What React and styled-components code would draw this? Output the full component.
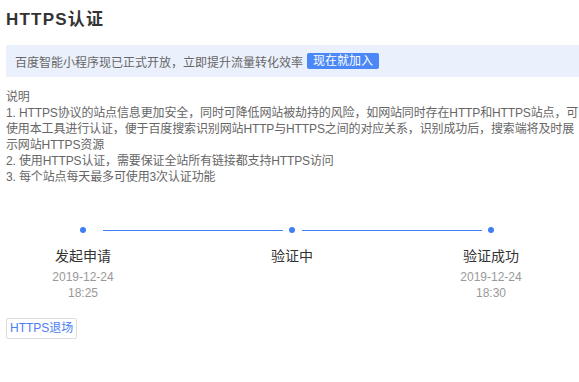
import React from "react";
import styled, { createGlobalStyle } from "styled-components";

const Global = createGlobalStyle`
  html, body { margin: 0; padding: 0; background: #fff; }
  body { font-family: "Liberation Sans", Arial, "Noto Sans CJK SC", sans-serif; }
`;

const Page = styled.div`
  padding: 8px 0 0 6px;
  width: 573px;
`;

const Title = styled.h1`
  margin: 0;
  font-size: 17px;
  line-height: 24px;
  font-weight: bold;
  letter-spacing: 1.2px;
  color: #333;
`;

const Banner = styled.div`
  margin-top: 13px;
  height: 32px;
  background: #ebf1fc;
  display: flex;
  align-items: center;
  padding-left: 9px;
  font-size: 12px;
  color: #666;
`;

const JoinButton = styled.span`
  margin-left: 4px;
  height: 16px;
  line-height: 16px;
  padding: 0 6px;
  background: #4a87f7;
  color: #fff;
  border-radius: 2px;
  font-size: 12px;
`;

const Notes = styled.div`
  margin-top: 12px;
  font-size: 12px;
  line-height: 16px;
  letter-spacing: -0.13px;
  color: #666;
`;

const NoteLine = styled.div``;

const Timeline = styled.div`
  display: flex;
  align-items: flex-start;
  margin: 42px 0 0 68px;
`;

const Step = styled.div`
  width: 18px;
  display: flex;
  flex-direction: column;
  align-items: center;
  white-space: nowrap;
`;

const Dot = styled.span`
  width: 6px;
  height: 6px;
  border-radius: 50%;
  background: #3f7ff5;
  display: block;
`;

const Connector = styled.div`
  width: 180px;
  height: 1px;
  margin-top: 3px;
  margin-left: ${(p) => p.$offset}px;
  background: #3f7ff5;
`;

const StepLabel = styled.div`
  margin-top: 13px;
  font-size: 14px;
  line-height: 20px;
  color: #333;
`;

const StepTime = styled.div`
  margin-top: 3px;
  font-size: 12px;
  line-height: 16px;
  color: #999;
  text-align: center;
`;

const ExitButton = styled.button`
  margin-top: 17px;
  height: 21px;
  padding: 0 3px;
  border: 1px solid #ddd;
  border-radius: 2px;
  background: #fff;
  color: #4c7ef5;
  font-family: inherit;
  font-size: 12px;
  line-height: 19px;
  cursor: pointer;
`;

const steps = [
  { label: "发起申请", time: ["2019-12-24", "18:25"] },
  { label: "验证中", time: null },
  { label: "验证成功", time: ["2019-12-24", "18:30"] },
];

export default function App() {
  return (
    <Page>
      <Global />
      <Title>HTTPS认证</Title>
      <Banner>
        百度智能小程序现已正式开放，立即提升流量转化效率
        <JoinButton>现在就加入</JoinButton>
      </Banner>
      <Notes>
        <NoteLine>说明</NoteLine>
        <NoteLine>
          1. HTTPS协议的站点信息更加安全，同时可降低网站被劫持的风险，如网站同时存在HTTP和HTTPS站点，可使用本工具进行认证，便于百度搜索识别网站HTTP与HTTPS之间的对应关系，识别成功后，搜索端将及时展示网站HTTPS资源
        </NoteLine>
        <NoteLine>2. 使用HTTPS认证，需要保证全站所有链接都支持HTTPS访问</NoteLine>
        <NoteLine>3. 每个站点每天最多可使用3次认证功能</NoteLine>
      </Notes>
      <Timeline>
        {steps.map((s, i) => (
          <React.Fragment key={s.label}>
            {i > 0 && <Connector $offset={i === 1 ? 11 : 1} />}
            <Step>
              <Dot />
              <StepLabel>{s.label}</StepLabel>
              {s.time && (
                <StepTime>
                  {s.time[0]}
                  <br />
                  {s.time[1]}
                </StepTime>
              )}
            </Step>
          </React.Fragment>
        ))}
      </Timeline>
      <ExitButton>HTTPS退场</ExitButton>
    </Page>
  );
}
